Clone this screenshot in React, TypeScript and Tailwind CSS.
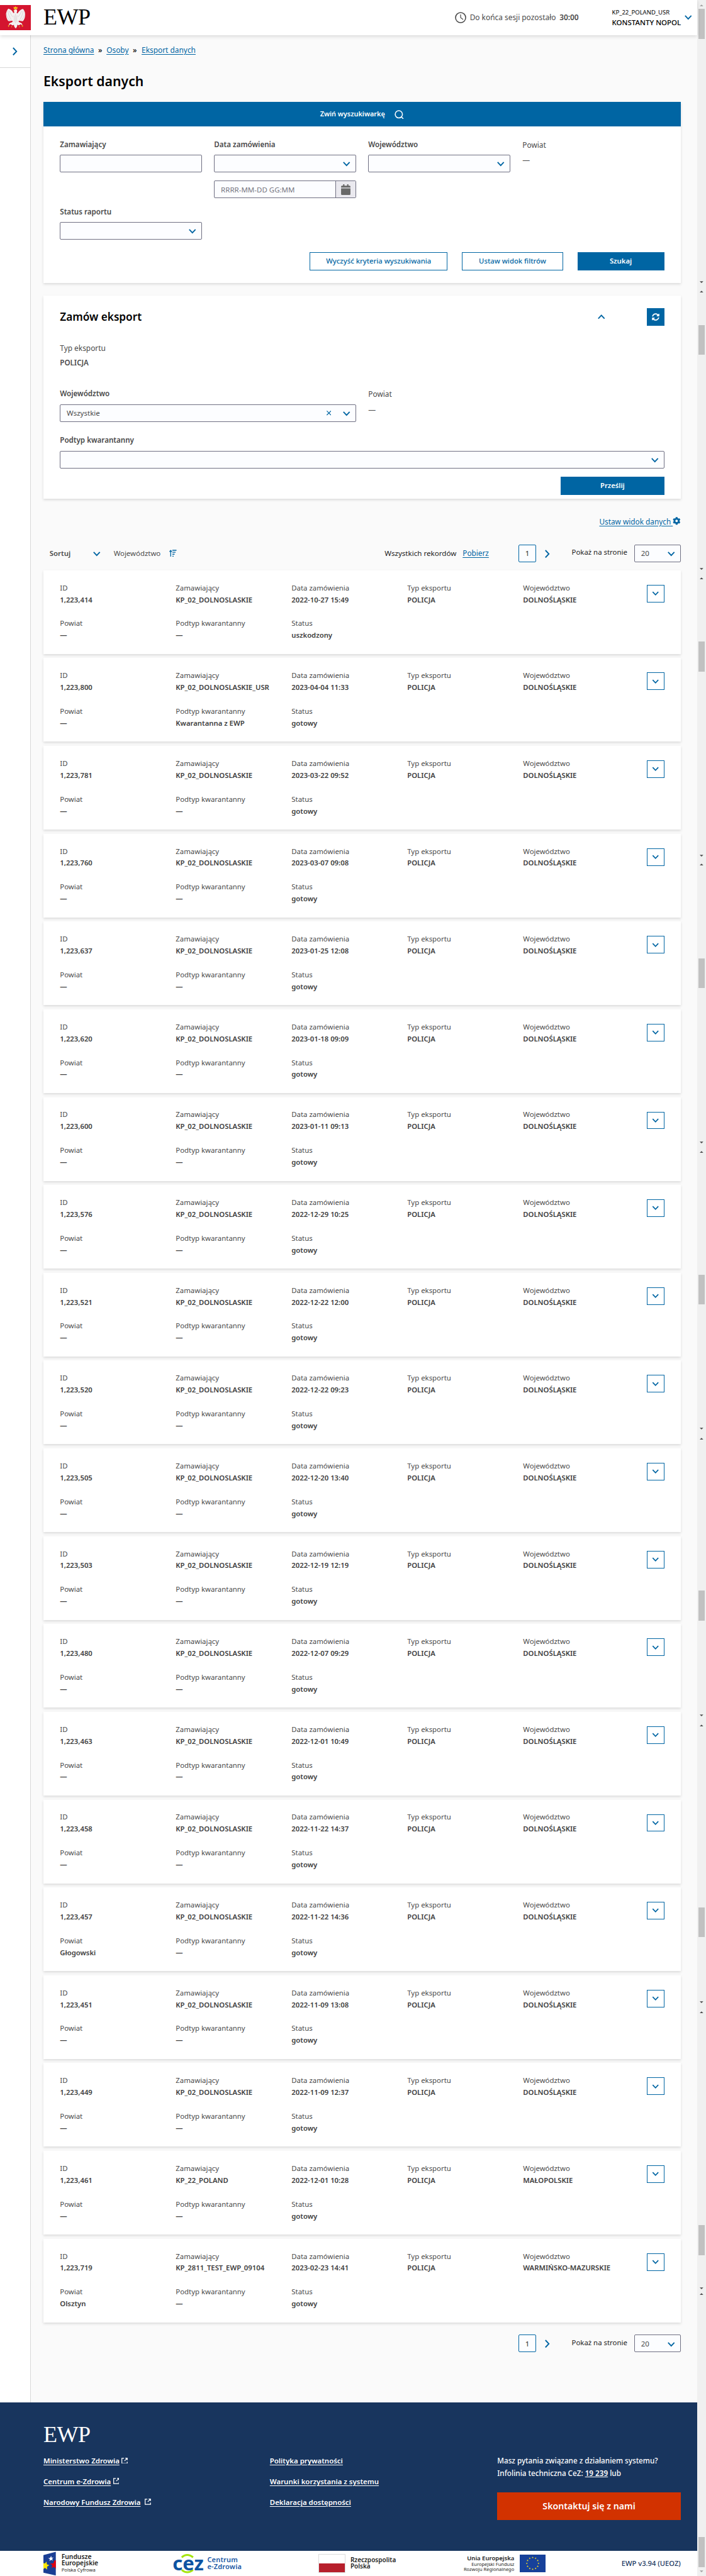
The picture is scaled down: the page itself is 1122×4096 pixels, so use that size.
import React from "react";
import { FaCalendar, FaCog, FaSyncAlt } from "react-icons/fa";

/* The root sets --spacing, so every spacing step below is one layout unit. */

type RecordRow = {
  id: string;
  user: string;
  date: string;
  region: string;
  county: string;
  subtype: string;
  status: string;
};

const row = (
  id: string,
  date: string,
  user = "KP_02_DOLNOSLASKIE",
  region = "DOLNOŚLĄSKIE",
  county = "—",
  subtype = "—",
  status = "gotowy",
): RecordRow => ({ id, user, date, region, county, subtype, status });

const records: RecordRow[] = [
  row("1,223,414", "2022-10-27 15:49", undefined, undefined, "—", "—", "uszkodzony"),
  row("1,223,800", "2023-04-04 11:33", "KP_02_DOLNOSLASKIE_USR", undefined, "—", "Kwarantanna z EWP"),
  row("1,223,781", "2023-03-22 09:52"),
  row("1,223,760", "2023-03-07 09:08"),
  row("1,223,637", "2023-01-25 12:08"),
  row("1,223,620", "2023-01-18 09:09"),
  row("1,223,600", "2023-01-11 09:13"),
  row("1,223,576", "2022-12-29 10:25"),
  row("1,223,521", "2022-12-22 12:00"),
  row("1,223,520", "2022-12-22 09:23"),
  row("1,223,505", "2022-12-20 13:40"),
  row("1,223,503", "2022-12-19 12:19"),
  row("1,223,480", "2022-12-07 09:29"),
  row("1,223,463", "2022-12-01 10:49"),
  row("1,223,458", "2022-11-22 14:37"),
  row("1,223,457", "2022-11-22 14:36", undefined, undefined, "Głogowski"),
  row("1,223,451", "2022-11-09 13:08"),
  row("1,223,449", "2022-11-09 12:37"),
  row("1,223,461", "2022-12-01 10:28", "KP_22_POLAND", "MAŁOPOLSKIE"),
  row("1,223,719", "2023-02-23 14:41", "KP_2811_TEST_EWP_09104", "WARMIŃSKO-MAZURSKIE", "Olsztyn"),
];

function Chevron({ className = "" }: { className?: string }) {
  return (
    <svg viewBox="0 0 14 9" className={`h-9 w-14 shrink-0 overflow-visible text-[#0065a3] ${className}`} fill="none" stroke="currentColor" strokeWidth="2.3">
      <path d="M1 1 7 7.4 13 1" />
    </svg>
  );
}

function ChevronRight({ className = "" }: { className?: string }) {
  return (
    <svg viewBox="0 0 9 14" className={`h-14 w-9 shrink-0 overflow-visible text-[#0065a3] ${className}`} fill="none" stroke="currentColor" strokeWidth="2.3">
      <path d="M1 0 7.6 7 1 14" />
    </svg>
  );
}

function Eagle() {
  return (
    <svg viewBox="0 0 60 48" className="h-48 w-60 shrink-0 bg-[#d4152f]">
      <path
        fill="#f4f1f1"
        d="M27.5 9.500c2-1.700 5-1.500 5.600.8.4 2-.8 3.400-.7 5.200.8.8 1.700.8 2.400-.5C37 11 40 8.500 44.500 7.500c1.500 1.500 2.600 3.500 3.300 5.500.8 2.500 1.200 5 .7 8-.2 2.800-.9 4.800-1.700 6.500-.7 1.700-1.900 3.400-3.100 3.900-.9.300-1.700-.1-2.200-.8-.9.9-2.200.7-2.700-.4-.7.800-1.800.700-2.300-.2-.7 1.200-.500 2.500.8 3.300 1.700 1 3.300 1.200 4.700 2.200 1 .8 1.200 2.100 1 3.700-1.200-1.400-2.400-1.900-4-2-.6 1.200-1.700 2-3 2-.9-.9-1.700-.900-2.700-.4.300 2.200-.8 4.200-2.800 6.700-2.100-2.200-3.700-4.300-3.500-6.700-1-.5-1.900-.3-2.700.6-1.400-.1-2.300-.9-2.800-2.200-1.800.1-3.100.7-4 2-.6-1.900-.1-3.100 1-3.900 1.500-.9 3.200-1 4.700-2 1.200-.7 1.400-2 .7-3.300-.7 1-1.700 1-2.300.2-.6 1-1.900 1.200-2.700.4-.6.800-1.400 1-2.300.6-1.200-.6-2.300-2.300-3-4-.9-2-1.500-4.200-1.700-6.800-.3-2.900.1-5.400.9-7.900.8-2.200 2-4.100 3.300-5.400 4.500 1.200 7.300 3.400 9 7.300.7 1.300 1.700 1.300 2.500.5.1-1.800-1.300-3.400-.8-5.100z"
      />
      <g fill="none" stroke="#cfc6c8" strokeWidth=".8">
        <path d="M15 11c1 6 3 12 7 18M12 16c1 6 3 10 7 14M45 11c-1 6-3 12-7 18M48 16c-1 6-3 10-7 14M18 11c2 5 4 9 7 12M42 11c-2 5-4 9-7 12M30 17v18M27 20c1 5 1 9 0 13M33 20c-1 5-1 9 0 13" />
      </g>
      <path fill="#f5c518" d="M26 3.500l2 1 2-2 2 2 2-1-.8 4.500h-6.200zM15.500 39l3 1-2.500 2.500zM44.500 39l-3 1 2.500 2.500zM21.500 41l2 .5-1 2zM38.500 41l-2 .5 1 2z" />
      <path fill="#f5c518" d="M27.500 9.500l-2 1.500 2 .3z" />
    </svg>
  );
}

function ClockIcon() {
  return (
    <svg viewBox="0 0 22 22" className="size-22 shrink-0 text-[#4a4a4a]" fill="none" stroke="currentColor">
      <circle cx="11" cy="11" r="9.800" strokeWidth="1.900" />
      <path d="M11 4.800V11l4.800 3.600" strokeWidth="1.500" />
    </svg>
  );
}

function SearchIcon() {
  return (
    <svg viewBox="0 0 18 18" className="size-18 text-white" fill="none" stroke="currentColor" strokeWidth="1.900">
      <circle cx="8.300" cy="8.300" r="7" />
      <path d="M13 13l4 4" />
    </svg>
  );
}

function SortIcon() {
  return (
    <svg viewBox="0 0 14 14" className="size-14 text-[#0065a3]" fill="none" stroke="currentColor" strokeWidth="1.600">
      <path d="M2.800 14V2M.5 4 2.800 1.500 5 4M6 1.200h8M6 5h6.200M6 8.800h4.300M6 12.600h2.500" />
    </svg>
  );
}

function ExternalIcon({ className = "" }: { className?: string }) {
  return (
    <svg viewBox="0 0 12 12" className={`size-12 shrink-0 text-white ${className}`} fill="none" stroke="currentColor" strokeWidth="1.500">
      <path d="M5 1H.8v10.200h10.400V7.500M7.500.8h3.700v3.700M11 1 5.800 6.200" />
    </svg>
  );
}

function Label({ children, bold = false, className = "" }: { children: React.ReactNode; bold?: boolean; className?: string }) {
  return (
    <div className={`leading-20 whitespace-nowrap text-[#4a4a4a] ${bold ? "text-[11.6px] font-semibold" : "text-[11.9px]"} ${className}`}>
      {children}
    </div>
  );
}

function Box({ children, className = "" }: { children?: React.ReactNode; className?: string }) {
  return (
    <div className={`flex h-34 items-center rounded-[2px] border border-[#6f6f82] bg-[#fcfdff] text-[11.5px] text-[#4a4a4a] ${className}`}>
      {children}
    </div>
  );
}

function SelectBox({ value, className = "" }: { value?: string; className?: string }) {
  return (
    <Box className={`justify-between pr-10 pl-12 ${className}`}>
      <span>{value}</span>
      <Chevron className="mt-2" />
    </Box>
  );
}

function Field({ label, value }: { label: string; value: string }) {
  return (
    <div className="w-224 text-[11.4px] leading-23 whitespace-nowrap text-[#4a4a4a]">
      <div>{label}</div>
      <div className="text-[11.3px] font-semibold text-[#404040]">{value}</div>
    </div>
  );
}

function RecordCard({ r }: { r: RecordRow }) {
  return (
    <article className="flex h-162 items-start justify-between bg-white pt-28 pr-32 pl-32 shadow-[0_2px_4px_rgba(0,0,0,0.13)]">
      <div className="-mt-5 grid w-1120 grid-cols-5 gap-y-23">
        <Field label="ID" value={r.id} />
        <Field label="Zamawiający" value={r.user} />
        <Field label="Data zamówienia" value={r.date} />
        <Field label="Typ eksportu" value="POLICJA" />
        <Field label="Województwo" value={r.region} />
        <Field label="Powiat" value={r.county} />
        <Field label="Podtyp kwarantanny" value={r.subtype} />
        <Field label="Status" value={r.status} />
      </div>
      <button className="flex size-34 items-center justify-center border border-[#0065a3] bg-white">
        <Chevron className="scale-90" />
      </button>
    </article>
  );
}

function Pager() {
  return (
    <div className="flex h-34 items-center text-[11.4px] text-[#1b1b1b]">
      <div className="flex h-34 w-34 items-center justify-center rounded-[2px] border border-[#0065a3] bg-[#fcfdff] font-medium text-[#4a4a4a]">1</div>
      <ChevronRight className="mt-2 ml-17" />
      <span className="-mt-5 ml-43 w-121 whitespace-nowrap">Pokaż na stronie</span>
      <SelectBox value="20" className="w-90" />
    </div>
  );
}

function FooterLink({ children, icon = false, gap = "ml-4" }: { children: string; icon?: boolean; gap?: string }) {
  return (
    <a className="flex h-20 items-center text-[11.45px] leading-20 font-semibold whitespace-nowrap text-white">
      <span className="underline decoration-1 underline-offset-2">{children}</span>
      {icon && <ExternalIcon className={`-mt-2 ${gap}`} />}
    </a>
  );
}

function FundsLogo() {
  return (
    <svg viewBox="0 0 24 47" className="h-47 w-24 shrink-0">
      <path fill="#1b3f94" d="M0 7 24 .5v46L0 41z" />
      <path fill="#fff" d="M15 8.500l.9 3.700 3.700-.5-2.800 2.500 1.400 3.500-3.400-1.700-3 2.700.6-4-3.400-1.700 3.900-.6z" />
      <path fill="#e3000f" d="M24 17.500v16l-3.500-3.700-5 2.200 2-5.300-4.300-3.200 6-.5L21.500 17z" />
      <path fill="#ffe800" d="M0 22.500l3 .5 3-3.500.7 5.500 4.800 1.500-4.300 2.800-.2 5.700-4-3.300L0 34z" />
    </svg>
  );
}

function CezLogo() {
  return (
    <div className="flex h-48 w-135 shrink-0 items-center">
      <div className="relative flex h-48 w-60 items-center justify-center">
        <svg viewBox="0 0 60 48" className="absolute inset-0 size-full" fill="none" stroke="#a6e50f" strokeWidth="3.600">
          <path d="M18 12.500Q28.500 3.500 40 12.500M18 37Q28.500 46 40 37" />
        </svg>
        <span className="relative -mt-2 text-[31px] leading-40 font-bold text-[#0d54a3]">cez</span>
      </div>
      <div className="ml-7 text-[11px] leading-13 font-semibold tracking-[0.2px] whitespace-nowrap text-[#1857a4]">
        <div>Centrum</div>
        <div>e-Zdrowia</div>
      </div>
    </div>
  );
}

const starAngles = [0, 30, 60, 90, 120, 150, 180, 210, 240, 270, 300, 330];

function EuFlag() {
  return (
    <svg viewBox="0 0 50 34" className="h-34 w-50 shrink-0 bg-[#17419a]">
      {starAngles.map((a) => (
        <path
          key={a}
          fill="#ffe11a"
          transform={`translate(${25 + 11.3 * Math.sin((a * Math.PI) / 180)} ${17 - 11.3 * Math.cos((a * Math.PI) / 180)})`}
          d="M0-1.900.5-.6 1.800-.6.8.300 1.100 1.600 0 .8-1.100 1.600-.8.300-1.800-.6-.5-.6z"
        />
      ))}
    </svg>
  );
}

const thumbs = [17, 629, 1242, 1855, 2467, 3079, 3692, 4307, 4911];
const upArrows = [9, 562, 1117, 1672, 2228, 2783, 3338, 3893, 4439];
const downArrows = [544, 1099, 1654, 2209, 2764, 3319, 3874, 4428, 4975];

function ScrollTrack() {
  const at = (n: number) => ({ top: `calc(var(--spacing) * ${n})` });
  return (
    <div className="relative min-w-0 flex-1 bg-[#f0f0f0]">
      {thumbs.map((n) => (
        <div key={n} className="absolute left-2 h-58 w-13 bg-[#c1c1c1]" style={at(n)} />
      ))}
      {upArrows.map((n, i) => (
        <svg key={n} viewBox="0 0 8 4" className={`absolute left-5 h-4 w-7 ${i === 0 ? "text-[#a3a3a3]" : "text-[#4d4d4d]"}`} style={at(n)}>
          <path fill="currentColor" d="M4 0 8 4H0z" />
        </svg>
      ))}
      {downArrows.map((n, i) => (
        <svg key={n} viewBox="0 0 8 4" className={`absolute left-5 h-4 w-7 ${i === 8 ? "text-[#a3a3a3]" : "text-[#4d4d4d]"}`} style={at(n)}>
          <path fill="currentColor" d="M0 0h8L4 4z" />
        </svg>
      ))}
    </div>
  );
}

export default function App() {
  return (
    <div className="flex h-[4096px] w-full overflow-hidden bg-[#fafafa] font-['Noto_Sans',sans-serif] [--spacing:0.82145px]">
      <div className="flex w-1349 shrink-0 flex-col">
        <header className="z-10 flex h-68 shrink-0 items-center bg-white shadow-[0_2px_6px_rgba(0,0,0,0.14)]">
          <Eagle />
          <div className="ml-24 w-796 font-['Liberation_Serif',serif] text-[36px] leading-48 tracking-[-0.5px] text-black">EWP</div>
          <ClockIcon />
          <div className="ml-7 flex w-275 text-[11.900px] whitespace-nowrap text-[#4a4a4a]">
            Do końca sesji pozostało <span className="ml-7 font-semibold">30:00</span>
          </div>
          <div className="w-141 leading-20 whitespace-nowrap text-black">
            <div className="text-[9.500px]">KP_22_POLAND_USR</div>
            <div className="text-[11.500px] font-medium">KONSTANTY NOPOL</div>
          </div>
          <Chevron />
        </header>

        <div className="flex h-4582 shrink-0">
          <aside className="w-60 shrink-0 border-r border-[#d8d8d8] bg-white">
            <div className="flex h-63 items-center justify-center border-b border-[#d8d8d8] pt-2">
              <ChevronRight />
            </div>
          </aside>

          <main className="w-1289 pr-32 pl-24">
            <nav className="flex pt-17 text-[11.900px] leading-24 whitespace-nowrap text-[#0065a3]">
              <span className="w-106 underline underline-offset-2">Strona główna</span>
              <span className="w-16 font-medium text-black">»</span>
              <span className="w-51 underline underline-offset-2">Osoby</span>
              <span className="w-17 font-medium text-black">»</span>
              <span className="underline underline-offset-2">Eksport danych</span>
            </nav>
            <h1 className="mt-30 text-[21.200px] leading-36 font-semibold text-black">Eksport danych</h1>

            <section className="mt-22 h-351 bg-white shadow-[0_2px_4px_rgba(0,0,0,0.13)]">
              <div className="flex h-48 items-center justify-center bg-[#0065a3] pb-1 text-[10.900px] font-semibold text-white">
                Zwiń wyszukiwarkę
                <span className="ml-19 pt-2">
                  <SearchIcon />
                </span>
              </div>
              <div className="px-32 pt-25">
                <div className="grid grid-cols-4 gap-x-24">
                  <div>
                    <Label bold>Zamawiający</Label>
                    <Box className="mt-10" />
                  </div>
                  <div>
                    <Label bold>Data zamówienia</Label>
                    <SelectBox className="mt-10" />
                    <Box className="mt-16 justify-between pl-12 text-[#75757f]">
                      <span>RRRR-MM-DD GG:MM</span>
                      <span className="flex h-full w-38 items-center justify-center border-l border-[#6f6f82] bg-[#eae9ef] text-[17px] text-[#696969]">
                        <FaCalendar />
                      </span>
                    </Box>
                  </div>
                  <div>
                    <Label bold>Województwo</Label>
                    <SelectBox className="mt-10" />
                  </div>
                  <div>
                    <Label>Powiat</Label>
                    <Label className="mt-10">—</Label>
                  </div>
                </div>
                <div className="mt-17 grid grid-cols-4 gap-x-24">
                  <div>
                    <Label bold>Status raportu</Label>
                    <SelectBox className="mt-9" />
                  </div>
                </div>
                <div className="mt-24 flex h-36 justify-end gap-28 text-[11.300px] font-medium whitespace-nowrap text-[#0065a3]">
                  <button className="w-267 border border-[#0065a3] pb-1">Wyczyść kryteria wyszukiwania</button>
                  <button className="w-195 border border-[#0065a3] pb-1">Ustaw widok filtrów</button>
                  <button className="w-168 bg-[#0065a3] pb-1 font-semibold text-white">Szukaj</button>
                </div>
              </div>
            </section>

            <section className="mt-24 h-394 bg-white px-32 pt-24 shadow-[0_2px_4px_rgba(0,0,0,0.13)]">
              <div className="flex h-35 items-center">
                <h2 className="flex-1 text-[17.200px] font-semibold text-black">Zamów eksport</h2>
                <Chevron className="mr-81 rotate-180" />
                <button className="flex h-35 w-34 items-center justify-center bg-[#0065a3] text-[12px] text-white">
                  <FaSyncAlt />
                </button>
              </div>
              <Label className="mt-33">Typ eksportu</Label>
              <Label bold className="mt-9">POLICJA</Label>
              <div className="mt-40 grid grid-cols-4 gap-x-24">
                <div className="col-span-2">
                  <Label bold>Województwo</Label>
                  <Box className="mt-10 pr-10 pl-12">
                    <span className="flex-1">Wszystkie</span>
                    <svg viewBox="0 0 10 10" className="mr-23 size-9 text-[#0065a3]" stroke="currentColor" strokeWidth="1.600">
                      <path d="M.5.5l9 9M9.500.5l-9 9" />
                    </svg>
                    <Chevron className="mt-2" />
                  </Box>
                </div>
                <div>
                  <Label>Powiat</Label>
                  <Label className="mt-10">—</Label>
                </div>
              </div>
              <Label bold className="mt-26">Podtyp kwarantanny</Label>
              <SelectBox className="mt-10" />
              <button className="mt-16 ml-auto block h-35 w-200 bg-[#0065a3] text-[11.200px] font-semibold text-white">Prześlij</button>
            </section>

            <div className="mt-33 flex h-20 items-center justify-end text-[11.800px] leading-20 text-[#0065a3]">
              <span className="underline underline-offset-2">Ustaw widok danych&nbsp;</span>
              <FaCog className="text-[12.600px]" />
            </div>

            <div className="mt-35 flex h-34 items-center pl-12 text-[11.400px] text-[#4a4a4a]">
              <span className="w-84 font-semibold">Sortuj</span>
              <Chevron className="mt-2" />
              <span className="ml-26 w-108">Województwo</span>
              <SortIcon />
              <div className="ml-auto flex items-center whitespace-nowrap">
                <span className="w-151 text-[11.600px] text-[#1b1b1b]">Wszystkich rekordów</span>
                <span className="w-108 text-[11.800px] text-[#0065a3]">
                  <span className="underline underline-offset-2">Pobierz</span>
                </span>
                <Pager />
              </div>
            </div>

            <div className="mt-16 flex flex-col gap-8">
              {records.map((r) => (
                <RecordCard key={r.id} r={r} />
              ))}
            </div>

            <div className="mt-24 flex justify-end">
              <Pager />
            </div>
          </main>
        </div>

        <footer className="h-288 shrink-0 bg-[#18355e] pt-41 pr-32 pl-84 text-white">
          <div className="font-['Liberation_Serif',serif] text-[36px] leading-44 tracking-[-0.5px]">EWP</div>
          <div className="mt-19 flex">
            <div className="flex w-438 flex-col gap-20">
              <FooterLink icon>Ministerstwo Zdrowia</FooterLink>
              <FooterLink icon>Centrum e-Zdrowia</FooterLink>
              <FooterLink icon gap="ml-8">
                Narodowy Fundusz Zdrowia
              </FooterLink>
            </div>
            <div className="flex w-440 flex-col gap-20">
              <FooterLink>Polityka prywatności</FooterLink>
              <FooterLink>Warunki korzystania z systemu</FooterLink>
              <FooterLink>Deklaracja dostępności</FooterLink>
            </div>
            <div className="w-355 text-[11.700px] font-medium whitespace-nowrap">
              <div className="-mt-2 leading-24">Masz pytania związane z działaniem systemu?</div>
              <div className="leading-24">
                Infolinia techniczna CeZ: <span className="font-semibold underline">19 239</span> lub
              </div>
              <button className="mt-24 block h-54 w-355 bg-[#d23200] text-[14.200px] font-semibold">Skontaktuj się z nami</button>
            </div>
          </div>
        </footer>

        <div className="flex flex-1 items-center bg-white pr-32 pl-84 text-[#1d1d1b]">
          <FundsLogo />
          <div className="ml-11 w-215 whitespace-nowrap">
            <div className="text-[10.300px] leading-12 font-semibold">Fundusze</div>
            <div className="text-[10.300px] leading-12 font-semibold">Europejskie</div>
            <div className="text-[7.600px] leading-13">Polska Cyfrowa</div>
          </div>
          <CezLogo />
          <div className="ml-147 flex h-36 w-52 shrink-0 flex-col border border-[#dcdcdc] bg-white">
            <div className="mt-auto h-17 bg-[#b71f2c]" />
          </div>
          <div className="ml-10 w-200 text-[10px] leading-12 font-semibold whitespace-nowrap">
            <div>Rzeczpospolita</div>
            <div>Polska</div>
          </div>
          <div className="-mt-1 w-117 text-right text-[7.500px] leading-10 whitespace-nowrap">
            <div className="text-[9.500px] leading-14 font-semibold">Unia Europejska</div>
            <div>Europejski Fundusz</div>
            <div>Rozwoju Regionalnego</div>
          </div>
          <div className="ml-11">
            <EuFlag />
          </div>
          <div className="ml-auto text-[11.200px] font-medium whitespace-nowrap text-[#18355e]">EWP v3.94 (UEOZ)</div>
        </div>
      </div>
      <ScrollTrack />
    </div>
  );
}
